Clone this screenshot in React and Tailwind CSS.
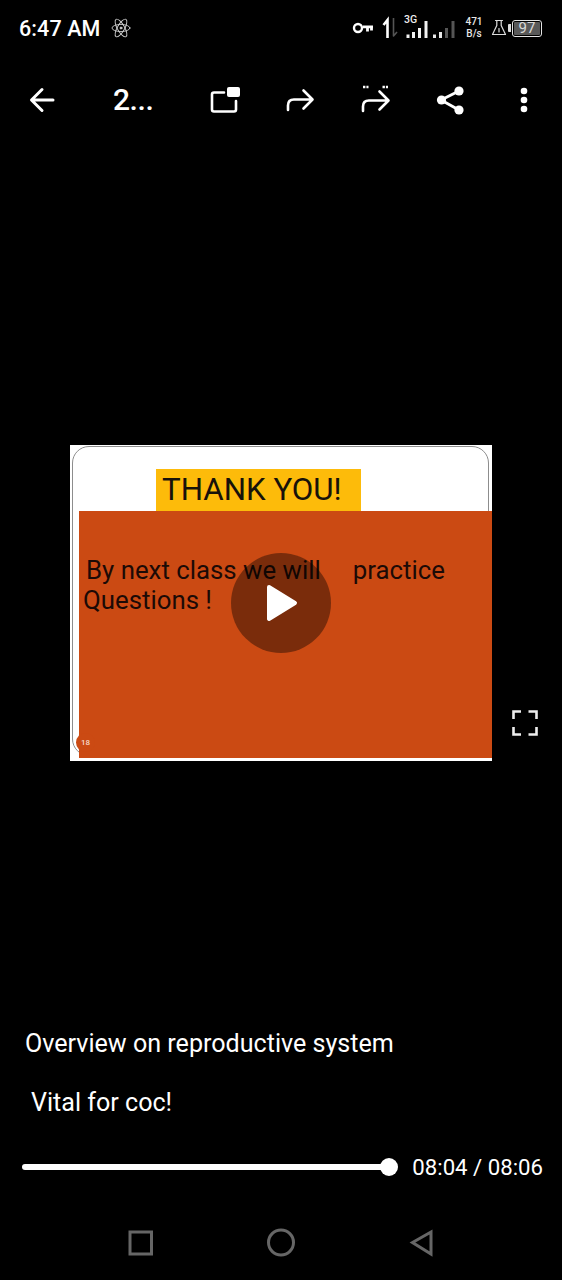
const ROBOTO = 'font-["Roboto",sans-serif]';

function Icon({ box, children, className = '' }) {
  const [x, y, w, h] = box;
  return (
    <svg
      viewBox={`${x} ${y} ${w} ${h}`}
      width={w}
      height={h}
      fill="none"
      stroke="currentColor"
      strokeLinecap="round"
      strokeLinejoin="round"
      className={`shrink-0 ${className}`}
    >
      {children}
    </svg>
  );
}

function StatusBar() {
  const barsA = [[407, 3.5], [412.5, 6], [418.5, 10], [425, 17]];
  const barsB = [[433.5, 3.5], [439.5, 6], [445.5, 10], [452, 17]];

  return (
    <div className="h-[56px] flex items-center pl-[19px] pr-[20px] text-white">
      <span className="mt-[2px] text-[21.5px] font-medium leading-none tracking-[0.1px]">6:47 AM</span>

      {/* atom */}
      <Icon box={[112, 18, 20, 20]} className="ml-[11px] text-[#cfcfcf]">
        <g strokeWidth="0.9">
          <ellipse cx="122" cy="28" rx="10" ry="3.6" transform="rotate(60 122 28)" />
          <ellipse cx="122" cy="28" rx="10" ry="3.6" transform="rotate(-60 122 28)" />
          <ellipse cx="122" cy="28" rx="9" ry="3.6" />
          <circle cx="122" cy="28" r="1" fill="currentColor" />
        </g>
      </Icon>

      <div className="ml-auto flex items-center">
        {/* key */}
        <Icon box={[350, 20, 24, 18]}>
          <circle cx="357" cy="29" r="4" strokeWidth="2.4" />
          <path d="M362 27.8H372M366.5 27.8V32.5M370.5 27.8V31.5" strokeWidth="2.8" strokeLinecap="butt" />
        </Icon>

        {/* data arrows */}
        <Icon box={[380, 16, 18, 24]} className="ml-[6px]">
          <path d="M386.5 38V20L382.5 25" strokeWidth="2.6" strokeLinecap="butt" strokeLinejoin="miter" />
          <path d="M392.5 18V36L396 32" strokeWidth="1.6" strokeLinecap="butt" className="text-[#555]" />
        </Icon>

        {/* signal */}
        <div className="relative ml-[4px] w-[54px] h-[24px]">
          <span className="absolute left-[1px] top-[-2px] text-[10.5px] font-medium leading-[12px] text-[#eee]">3G</span>
          <Icon box={[402, 16, 54, 24]}>
            {barsA.map(([x, h]) => (
              <rect key={x} x={x - 1.5} y={38 - h} width="3" height={h} fill="#f2f2f2" stroke="none" />
            ))}
            {barsB.map(([x, h], i) => (
              <rect key={x} x={x - 1.5} y={38 - h} width="3" height={h} fill={i < 2 ? '#e8e8e8' : '#555'} stroke="none" />
            ))}
          </Icon>
        </div>

        <div className="ml-[8px] w-[18px] flex flex-col items-center text-[10px] font-medium leading-[12.5px] text-[#e6e6e6]">
          <span>471</span>
          <span>B/s</span>
        </div>

        {/* flask */}
        <Icon box={[490, 18, 16, 20]} className="ml-[8px] text-[#ddd]">
          <path d="M494.5 20.5H501.5M495.8 20.5V25.5L491.5 34.5H504.5L500.2 25.5V20.5" strokeWidth="1.2" />
          <path d="M498 28.5V32" strokeWidth="1.2" />
        </Icon>

        {/* battery */}
        <div className="ml-[1px] flex items-center">
          <div className="w-[3px] h-[8px] bg-[#ddd] rounded-l-[1px]" />
          <div className="ml-[1px] w-[30px] h-[17px] border-[1.5px] border-[#e4e4e4] rounded-[3px] p-[1px]">
            <div className="h-full w-full bg-[#595959] rounded-[1px] flex items-center justify-center text-[15px] leading-none text-[#d8d8d8]">
              97
            </div>
          </div>
        </div>
      </div>
    </div>
  );
}

function Toolbar() {
  return (
    <div className="h-[88px] flex items-center pl-[5px] text-white">
      <div className="w-[75px] flex justify-center">
        <Icon box={[28, 86, 30, 28]}>
          <path d="M54 100H33M43 89.5L32.5 100L43 110.5" strokeWidth="3" />
        </Icon>
      </div>

      <span className="ml-[33px] w-[74.5px] text-[30px] font-medium leading-none tracking-[-0.4px]">2...</span>

      <div className="w-[75px] flex justify-center">
        <Icon box={[209, 85, 32, 30]}>
          <path d="M224 92.5H214Q212 92.5 212 94.5V109.5Q212 111.5 214 111.5H234Q236 111.5 236 109.5V101" strokeWidth="2.6" />
          <rect x="227" y="87" width="13" height="10" rx="2" fill="currentColor" stroke="none" />
        </Icon>
      </div>

      <div className="w-[75px] flex justify-center">
        <Icon box={[284, 85, 32, 30]}>
          <path d="M288 110V105.5Q288 99.5 294 99.5H312M303.5 90.5L312.5 99.5L303.5 108.5" strokeWidth="2.6" />
        </Icon>
      </div>

      <div className="w-[75px] flex justify-center">
        <Icon box={[358, 83, 32, 32]}>
          <path d="M362 110V105.5Q362 99.5 368 99.5H387M378.5 90.5L387.5 99.5L378.5 108.5" strokeWidth="2.6" />
          <path d="M362 86H367.5M381.5 86H387" strokeWidth="2.4" strokeLinecap="butt" strokeDasharray="2.4 1" />
        </Icon>
      </div>

      <div className="w-[75px] flex justify-center">
        <Icon box={[435, 85, 30, 30]}>
          <path d="M459 91L441 100L459 110" strokeWidth="3" />
          <circle cx="459" cy="91" r="4.6" fill="currentColor" stroke="none" />
          <circle cx="441.5" cy="100" r="4.6" fill="currentColor" stroke="none" />
          <circle cx="459" cy="110" r="4.6" fill="currentColor" stroke="none" />
        </Icon>
      </div>

      <div className="w-[75px] flex justify-center">
        <Icon box={[514, 85, 20, 30]}>
          <circle cx="524" cy="91" r="3.3" fill="currentColor" stroke="none" />
          <circle cx="524" cy="100" r="3.3" fill="currentColor" stroke="none" />
          <circle cx="524" cy="109" r="3.3" fill="currentColor" stroke="none" />
        </Icon>
      </div>
    </div>
  );
}

function Slide() {
  return (
    <div className="relative ml-[70px] w-[422px] h-[316px] bg-white pt-[24px] text-[#1c0a06] overflow-hidden">
      {/* rounded frame of the slide, runs behind the orange block */}
      <div className="absolute left-[2px] top-[1px] w-[417px] h-[310px] border border-[#8d8d8d] rounded-[17px]" />

      <div className="relative ml-[86px] w-[205px] h-[42px] bg-[#fdbb0a] pl-[6px] text-[31.3px] leading-[41px] text-[#17120a]">
        THANK YOU!
      </div>

      <div className="relative ml-[9px] h-[247px] bg-[#cb4a13] text-[25.8px] leading-[30px]">
        <div className="pt-[44px] pl-[7px] whitespace-nowrap">
          By next class we will
          <span className="ml-[32px]">practice</span>
        </div>
        <div className="pl-[4px]">Questions !</div>

        {/* page number */}
        <div className="absolute left-[-3px] bottom-[6px] w-[19px] h-[19px] rounded-full bg-[#cb4a13] flex items-center justify-center text-[8px] font-medium leading-none text-[#f6d9c8]">
          18
        </div>
      </div>

      {/* play button */}
      <div className="absolute left-[161px] top-[108px] w-[100px] h-[100px] rounded-full bg-black/40 flex items-center justify-center">
        <svg viewBox="0 0 32 38" width="32" height="38" className="ml-[2px]">
          <path d="M3 3L29 19L3 35Z" fill="white" stroke="white" strokeWidth="4" strokeLinejoin="round" />
        </svg>
      </div>
    </div>
  );
}

export default function App() {
  return (
    <div className={`relative w-[562px] h-[1280px] bg-black overflow-hidden ${ROBOTO}`}>
      <StatusBar />
      <Toolbar />

      <div className="relative pt-[301px] h-[882px]">
        <Slide />

        {/* fullscreen */}
        <div className="absolute left-[510px] top-[564px] text-[#eee]">
          <Icon box={[510, 708, 30, 30]}>
            <path
              d="M513.5 719V711.5H521M528.5 711.5H536.5V719M536.5 727V734.5H528.5M521 734.5H513.5V727"
              strokeWidth="2.6"
              strokeLinecap="butt"
              strokeLinejoin="miter"
            />
          </Icon>
        </div>
      </div>

      {/* caption */}
      <div className="text-white text-[25.1px] leading-[35px]">
        <p className="pl-[25px]">Overview on reproductive system</p>
        <p className="pl-[31px] mt-[24px]">Vital for coc!</p>
      </div>

      {/* seek bar */}
      <div className="mt-[31px] ml-[22px] mr-[19px] h-[32px] flex items-center text-white">
        <div className="relative w-[367px] h-[6px] rounded-full bg-white">
          <div className="absolute right-[-9px] top-[-6px] w-[18px] h-[18px] rounded-full bg-white" />
        </div>
        <span className="ml-auto text-[22.2px] leading-none">08:04 / 08:06</span>
      </div>

      {/* nav bar */}
      <div className="mt-[43px] flex justify-center text-[#666]">
        <Icon box={[125, 1226, 312, 32]}>
          <rect x="130" y="1232" width="21.5" height="22" strokeWidth="3" strokeLinejoin="miter" />
          <circle cx="281" cy="1242.5" r="12.5" strokeWidth="3" />
          <path d="M431 1232L412.5 1242.5L431 1254Z" strokeWidth="3" strokeLinejoin="miter" />
        </Icon>
      </div>
    </div>
  );
}
